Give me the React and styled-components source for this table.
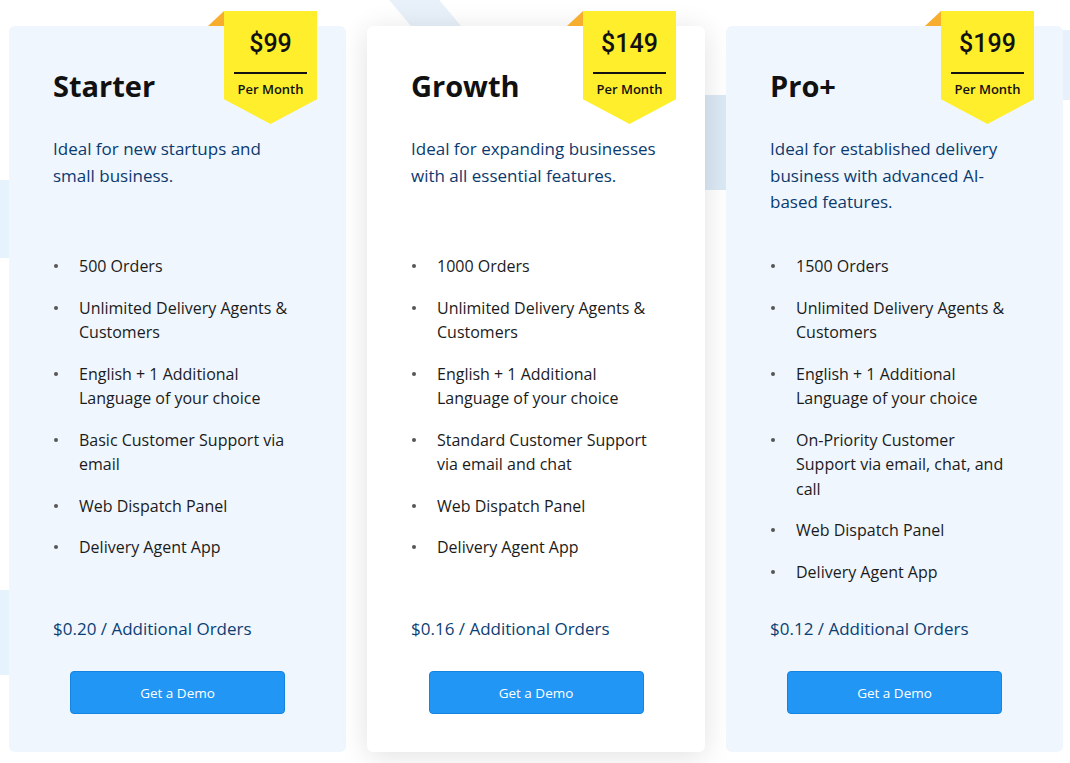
import React from 'react';
import styled, { createGlobalStyle } from 'styled-components';

const GlobalStyle = createGlobalStyle`
  html, body {
    margin: 0;
    padding: 0;
    background: #ffffff;
    overflow: hidden;
  }
  body {
    font-family: 'Open Sans', 'Lato', sans-serif;
  }
`;

const Page = styled.div`
  position: relative;
  width: 1070px;
  height: 763px;
  overflow: hidden;
  background: #ffffff;
`;

// faint light blue shapes behind the cards
const Decor = styled.div`
  position: absolute;
  background: ${(p) => p.color || '#e6f1fb'};
  z-index: 0;
`;

const Grid = styled.div`
  position: relative;
  z-index: 1;
  display: grid;
  grid-template-columns: 337px 338px 337px;
  column-gap: 21px;
  padding: 26px 0 0 9px;
`;

const Card = styled.div`
  position: relative;
  height: 726px;
  box-sizing: border-box;
  padding: 42px 44px 38px 44px;
  display: flex;
  flex-direction: column;
  border-radius: 6px;
  background: ${(p) => (p.featured ? '#ffffff' : '#eff6fe')};
  box-shadow: ${(p) =>
    p.featured ? '0 4px 28px rgba(0, 0, 0, 0.12)' : 'none'};
`;

const Ribbon = styled.div`
  position: absolute;
  top: -15px;
  right: 29px;
  width: 93px;
  height: 113px;
  background: #ffee2b;
  clip-path: polygon(0 0, 100% 0, 100% 78%, 50% 100%, 0 78%);
  display: flex;
  flex-direction: column;
  align-items: center;
  box-sizing: border-box;
  padding-top: 18px;
`;

const Fold = styled.div`
  position: absolute;
  top: -15px;
  right: 122px;
  width: 0;
  height: 0;
  border-style: solid;
  border-width: 0 0 15px 16px;
  border-color: transparent transparent #f7ae2f transparent;
`;

const Price = styled.div`
  font-family: 'Roboto', sans-serif;
  font-weight: 500;
  font-size: 25px;
  line-height: 30px;
  color: #111111;
`;

const Divider = styled.div`
  width: 73px;
  height: 2px;
  background: #111111;
  margin-top: 13px;
`;

const Period = styled.div`
  font-size: 13px;
  font-weight: 600;
  color: #111111;
  margin-top: 6px;
`;

const Title = styled.h2`
  margin: 0;
  font-size: 29px;
  line-height: 36px;
  font-weight: 700;
  color: #111111;
`;

const Description = styled.p`
  margin: 32px 0 0;
  min-height: 80px;
  font-size: 17px;
  line-height: 26.5px;
  color: #0b3a6e;
`;

const Features = styled.ul`
  list-style: none;
  margin: 38px 0 0;
  padding: 0 7px 0 0;
  display: flex;
  flex-direction: column;
  gap: 17px;
`;

const Feature = styled.li`
  position: relative;
  padding-left: 26px;
  font-size: 16px;
  line-height: 24.5px;
  color: #1b1b1b;

  &::before {
    content: '';
    position: absolute;
    left: 1px;
    top: 10px;
    width: 4px;
    height: 4px;
    border-radius: 50%;
    background: #555555;
  }
`;

const Extra = styled.div`
  margin-top: auto;
  font-size: 17px;
  line-height: 24px;
  color: #0b3f74;
`;

const DemoButton = styled.button`
  align-self: center;
  margin: 30px 0 0;
  width: 215px;
  height: 43px;
  border: 1px solid #1583e0;
  border-radius: 4px;
  background: #2196f5;
  color: #ffffff;
  font-family: 'Open Sans', sans-serif;
  font-size: 13.5px;
  cursor: pointer;
`;

const plans = [
  {
    name: 'Starter',
    price: '$99',
    description: 'Ideal for new startups and small business.',
    features: [
      '500 Orders',
      'Unlimited Delivery Agents & Customers',
      'English + 1 Additional Language of your choice',
      'Basic Customer Support via email',
      'Web Dispatch Panel',
      'Delivery Agent App',
    ],
    extra: '$0.20 / Additional Orders',
  },
  {
    name: 'Growth',
    price: '$149',
    featured: true,
    description: 'Ideal for expanding businesses with all essential features.',
    features: [
      '1000 Orders',
      'Unlimited Delivery Agents & Customers',
      'English + 1 Additional Language of your choice',
      'Standard Customer Support via email and chat',
      'Web Dispatch Panel',
      'Delivery Agent App',
    ],
    extra: '$0.16 / Additional Orders',
  },
  {
    name: 'Pro+',
    price: '$199',
    description:
      'Ideal for established delivery business with advanced AI-based features.',
    features: [
      '1500 Orders',
      'Unlimited Delivery Agents & Customers',
      'English + 1 Additional Language of your choice',
      'On-Priority Customer Support via email, chat, and call',
      'Web Dispatch Panel',
      'Delivery Agent App',
    ],
    extra: '$0.12 / Additional Orders',
  },
];

export default function App() {
  return (
    <Page>
      <GlobalStyle />
      <Decor color="#e8f1f9" style={{ left: 385, top: -40, width: 50, height: 70, transform: 'skewX(40deg)' }} />
      <Decor color="#dbe9f5" style={{ left: 695, top: 95, width: 40, height: 95 }} />
      <Decor color="#e7f1fb" style={{ left: 1050, top: 30, width: 30, height: 70 }} />
      <Decor color="#e6f2fc" style={{ left: 0, top: 180, width: 20, height: 78 }} />
      <Decor color="#e6f2fc" style={{ left: 0, top: 590, width: 20, height: 85 }} />
      <Grid>
        {plans.map((plan) => (
          <Card key={plan.name} featured={plan.featured}>
            <Fold />
            <Ribbon>
              <Price>{plan.price}</Price>
              <Divider />
              <Period>Per Month</Period>
            </Ribbon>
            <Title>{plan.name}</Title>
            <Description>{plan.description}</Description>
            <Features>
              {plan.features.map((f) => (
                <Feature key={f}>{f}</Feature>
              ))}
            </Features>
            <Extra>{plan.extra}</Extra>
            <DemoButton>Get a Demo</DemoButton>
          </Card>
        ))}
      </Grid>
    </Page>
  );
}
